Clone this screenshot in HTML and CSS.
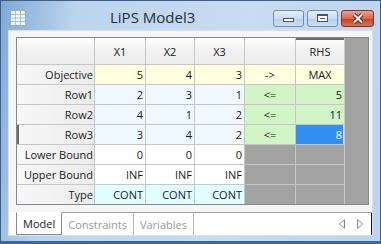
FILE: index.html
```html
<html>

<head>
	<title>LiPS Model3</title>
	<link rel="stylesheet" href="styles.css">
</head>

<body>
	<div class="window">
		<div class="titlebar">
			<svg class="titlebar__icon" width="16" height="16" viewBox="0 0 16 16">
				<rect x="0.5" y="0.5" width="15" height="15" fill="#f4fbff" stroke="#8fb3cf" />
				<rect x="1" y="1" width="14" height="3" fill="#fff6c8" />
				<path d="M1 4.5h14M1 8h14M1 11.5h14M5.5 1v14M10.5 1v14" stroke="#9cc6de" stroke-width="1" fill="none" />
			</svg>
			<div class="titlebar__title">LiPS Model3</div>
			<div class="titlebar__buttons">
				<div class="caption-button">
					<span class="caption-button__min"></span>
				</div>
				<div class="caption-button">
					<span class="caption-button__max"></span>
				</div>
				<div class="caption-button caption-button--close">
					<svg width="14" height="11" viewBox="0 0 14 11">
						<path d="M3 1.5l8 8M11 1.5l-8 8" stroke="#5a2418" stroke-width="4" fill="none" />
						<path d="M3 1.5l8 8M11 1.5l-8 8" stroke="#ffffff" stroke-width="2" fill="none" />
					</svg>
				</div>
			</div>
		</div>

		<div class="client">
			<div class="grid">
				<div class="cell cell--corner"></div>
				<div class="cell cell--colhead">X1</div>
				<div class="cell cell--colhead">X2</div>
				<div class="cell cell--colhead">X3</div>
				<div class="cell cell--colhead"></div>
				<div class="cell cell--colhead cell--current-col">RHS</div>
				<div class="grid__filler"></div>

				<div class="cell cell--rowhead">Objective</div>
				<div class="cell cell--yellow">5</div>
				<div class="cell cell--yellow">4</div>
				<div class="cell cell--yellow">3</div>
				<div class="cell cell--yellow cell--center">-&gt;</div>
				<div class="cell cell--yellow cell--center">MAX</div>

				<div class="cell cell--rowhead">Row1</div>
				<div class="cell cell--blue">2</div>
				<div class="cell cell--blue">3</div>
				<div class="cell cell--blue">1</div>
				<div class="cell cell--green cell--center">&lt;=</div>
				<div class="cell cell--green">5</div>

				<div class="cell cell--rowhead">Row2</div>
				<div class="cell cell--blue">4</div>
				<div class="cell cell--blue">1</div>
				<div class="cell cell--blue">2</div>
				<div class="cell cell--green cell--center">&lt;=</div>
				<div class="cell cell--green">11</div>

				<div class="cell cell--rowhead cell--current-row">Row3</div>
				<div class="cell cell--blue">3</div>
				<div class="cell cell--blue">4</div>
				<div class="cell cell--blue">2</div>
				<div class="cell cell--green cell--center">&lt;=</div>
				<div class="cell cell--selected">8</div>

				<div class="cell cell--rowhead">Lower Bound</div>
				<div class="cell">0</div>
				<div class="cell">0</div>
				<div class="cell">0</div>
				<div class="cell cell--empty"></div>
				<div class="cell cell--empty"></div>

				<div class="cell cell--rowhead">Upper Bound</div>
				<div class="cell">INF</div>
				<div class="cell">INF</div>
				<div class="cell">INF</div>
				<div class="cell cell--empty"></div>
				<div class="cell cell--empty"></div>

				<div class="cell cell--rowhead">Type</div>
				<div class="cell cell--cyan">CONT</div>
				<div class="cell cell--cyan">CONT</div>
				<div class="cell cell--cyan">CONT</div>
				<div class="cell cell--empty"></div>
				<div class="cell cell--empty"></div>
			</div>

			<div class="tabs">
				<div class="tab tab--active">Model</div>
				<div class="tab">Constraints</div>
				<div class="tab">Variables</div>
				<div class="tabs__rest">
					<svg width="30" height="12" viewBox="0 0 30 12">
						<path d="M8.5 1.5v9l-5-4.5z" fill="none" stroke="#8a8a8a" />
						<path d="M21.5 1.5v9l5-4.5z" fill="none" stroke="#8a8a8a" />
					</svg>
				</div>
			</div>
		</div>
		<div class="frame-bottom"></div>
	</div>
</body>

</html>
```

FILE: styles.css
```css
* {
	margin: 0;
	padding: 0;
	box-sizing: border-box;
}

body {
	width: 381px;
	height: 244px;
	overflow: hidden;
	font-family: "Open Sans", "Noto Sans", sans-serif;
	background-color: #a9c6e6;
}

.window {
	width: 381px;
	height: 244px;
	display: flex;
	flex-direction: column;
	border: 1px solid #3f5f86;
	border-bottom: none;
	background: linear-gradient(100deg, #7ea9d6 0%, #bcd4ee 18%, #c8dcf2 60%, #bdd3ec 100%);
}

.titlebar {
	height: 30px;
	display: flex;
	align-items: center;
	padding: 0 6px 0 9px;
}

.titlebar__icon {
	flex-shrink: 0;
	margin-top: 6px;
}

.titlebar__title {
	flex: 1;
	padding-left: 84px;
	padding-top: 4px;
	font-size: 15px;
	color: #1b2f45;
}

.titlebar__buttons {
	display: flex;
	gap: 3px;
	margin-top: 6px;
}

.caption-button {
	width: 31px;
	height: 17px;
	border: 1px solid #6e8db3;
	border-radius: 3px;
	background: linear-gradient(#e6eff9, #cbdcef 50%, #b7cde8 51%, #cfdff1);
	display: flex;
	align-items: center;
	justify-content: center;
}

.caption-button--close {
	width: 33px;
	border-color: #7a3528;
	background: linear-gradient(#eaa596, #d9674c 50%, #c8401f 51%, #d9704f);
}

.caption-button__min {
	width: 11px;
	height: 4px;
	margin-top: 4px;
	background-color: #ffffff;
	border: 1px solid #3c5779;
}

.caption-button__max {
	width: 11px;
	height: 8px;
	border: 1px solid #3c5779;
	border-top-width: 2px;
	background-color: #ffffff;
	box-shadow: inset 0 0 0 2px #ffffff, inset 0 0 0 3px #3c5779;
}

.client {
	flex: 1;
	margin: 1px 7px 0 7px;
	padding: 6px 0 0 7px;
	background-color: #f6f6f6;
	border: 1px solid #d6e2ef;
	display: flex;
	flex-direction: column;
}

.grid {
	width: 353px;
	display: grid;
	grid-template-columns: 77px 50px 48px 49px 50px 48px 23px;
	grid-template-rows: 26px repeat(7, 19px);
	gap: 1px;
	background-color: #c6c6c6;
	border: 1px solid #828790;
	font-size: 11px;
	color: #1a1a1a;
}

.cell {
	display: flex;
	align-items: center;
	justify-content: flex-end;
	padding: 0 2px 0 2px;
	background-color: #ffffff;
	white-space: nowrap;
	overflow: hidden;
}

.cell--corner,
.cell--colhead {
	justify-content: center;
	background: linear-gradient(#ffffff, #f2f2f2 40%, #ececec);
}

.cell--rowhead {
	background: linear-gradient(90deg, #f7f7f7, #ececec);
	padding-right: 1px;
}

.cell--current-col {
	box-shadow: inset 0 2px 0 #6b6b6b;
}

.cell--current-row {
	box-shadow: inset 2px 0 0 #6b6b6b;
}

.cell--center {
	justify-content: center;
}

.cell--yellow {
	background-color: #ffffe0;
}

.cell--blue {
	background-color: #f0f8ff;
}

.cell--green {
	background-color: #d2f5c8;
}

.cell--cyan {
	background-color: #e0ffff;
}

.cell--selected {
	background-color: #3390f0;
	color: #ffffff;
	box-shadow: inset -1px 0 0 #cfe4fb;
}

.cell--empty {
	background-color: #a3a3a3;
}

.grid__filler {
	grid-column: 7;
	grid-row: 1 / span 8;
	background-color: #a3a3a3;
}

.tabs {
	display: flex;
	height: 23px;
	margin-top: 7px;
	font-size: 11px;
	background-color: #ffffff;
	margin-left: -7px;
	padding-left: 7px;
}

.tab {
	padding: 0 6px;
	display: flex;
	align-items: center;
	color: #9a9a9a;
	border-top: 1px solid #9c9c9c;
	border-right: 1px solid #b8b8b8;
}

.tab--active {
	color: #1a1a1a;
	border-top-color: #ffffff;
	border-left: 1px solid #8a8a8a;
	border-right: 1px solid #8a8a8a;
	border-bottom: 1px solid #8a8a8a;
}

.tabs__rest {
	flex: 1;
	display: flex;
	align-items: center;
	justify-content: flex-end;
	padding-right: 6px;
	border-top: 1px solid #9c9c9c;
	box-shadow: inset -36px 1px 0 -35px #1a1a1a;
}

.frame-bottom {
	height: 8px;
	border-bottom: 3px solid #3f6796;
}
```
